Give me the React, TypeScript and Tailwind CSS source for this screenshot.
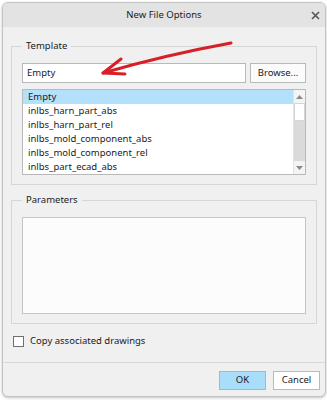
import React from "react";

const templates = [
  "Empty",
  "inlbs_harn_part_abs",
  "inlbs_harn_part_rel",
  "inlbs_mold_component_abs",
  "inlbs_mold_component_rel",
  "inlbs_part_ecad_abs",
];

function ScrollArrow({ up }: { up?: boolean }) {
  return (
    <div className="h-[13px] flex items-center justify-center bg-[#f4f4f4]">
      <svg width="7" height="4" viewBox="0 0 7 4">
        <path d={up ? "M0 4 L3.5 0 L7 4 Z" : "M0 0 L3.5 4 L7 0 Z"} fill="#8a8a8a" />
      </svg>
    </div>
  );
}

export default function App() {
  return (
    <div
      className="relative w-[327px] h-[400px] bg-white pt-[2px] pl-[2px] text-[9.5px] text-[#1b1b1b]"
      style={{ fontFamily: '"Noto Sans", "Open Sans", sans-serif' }}
    >
      <div className="w-[324px] h-[395px] flex flex-col rounded-[6px] border border-[#c4c4c4] bg-[#f0f0f0] overflow-hidden shadow-[0_1px_3px_rgba(0,0,0,0.25)]">
        {/* Title bar */}
        <div className="relative h-[24px] shrink-0 bg-[#e3e3e3] flex items-center justify-center">
          <span className="text-[9.5px] text-[#1b1b1b]">New File Options</span>
          <span className="absolute right-[3px] top-[5px] w-[14px] h-[14px] flex items-center justify-center">
            <svg width="9" height="9" viewBox="0 0 9 9">
              <path d="M1 1 L8 8 M8 1 L1 8" stroke="#555" strokeWidth="1.6" />
            </svg>
          </span>
        </div>

        <div className="flex flex-col px-[8px] pt-[12px]">
          {/* Template group */}
          <fieldset className="border border-[#d6d6d6] px-[10px] pt-[10px] pb-[9px]">
            <legend className="px-[4px] leading-[14px]">Template</legend>
            <div className="flex gap-[4px]">
              <div className="flex-1 h-[20px] border border-[#b9b9b9] bg-white flex items-center px-[4px]">
                Empty
              </div>
              <button className="w-[56px] h-[20px] border border-[#b9b9b9] bg-[#fbfbfb] flex items-center justify-center">
                Browse...
              </button>
            </div>
            <div className="mt-[6px] h-[86px] border border-[#b9b9b9] bg-white flex">
              <div className="flex-1 flex flex-col">
                {templates.map((t, i) => (
                  <div
                    key={t}
                    className={
                      i === 0
                        ? "h-[14px] leading-[14px] px-[5px] bg-[#b3e1fb]"
                        : "h-[14px] leading-[14px] px-[5px]"
                    }
                  >
                    {t}
                  </div>
                ))}
              </div>
              <div className="w-[12px] flex flex-col border-l border-[#e2e2e2] bg-[#dadada]">
                <ScrollArrow up />
                <div className="h-[18px] bg-white border border-[#d6d6d6]" />
                <div className="flex-1" />
                <ScrollArrow />
              </div>
            </div>
          </fieldset>

          {/* Parameters group */}
          <fieldset className="mt-[8px] border border-[#d6d6d6] px-[10px] pt-[10px] pb-[9px]">
            <legend className="px-[4px] leading-[14px]">Parameters</legend>
            <div className="h-[97px] border border-[#c6c6c6] bg-[#fcfcfc]" />
          </fieldset>

          {/* Checkbox */}
          <label className="mt-[9px] flex items-center gap-[6px] pl-[2px] leading-[16px]">
            <span className="w-[11px] h-[11px] border border-[#6f6f6f] bg-white" />
            <span>Copy associated drawings</span>
          </label>
        </div>

        {/* Footer */}
        <div className="mt-auto h-[34px] shrink-0 border-t border-[#d9d9d9] flex justify-end items-start gap-[7px] px-[5px] pt-[8px]">
          <button className="w-[47px] h-[19px] border border-[#7cc6ec] bg-[#a9defa] flex items-center justify-center">
            OK
          </button>
          <button className="w-[47px] h-[19px] border border-[#b9b9b9] bg-white flex items-center justify-center">
            Cancel
          </button>
        </div>
      </div>

      {/* Red annotation arrow */}
      <svg className="absolute left-0 top-0 pointer-events-none" width="327" height="400">
        <path
          d="M231 43 Q165 55 103 73"
          fill="none"
          stroke="#d61f26"
          strokeWidth="3"
          strokeLinecap="round"
        />
        <path
          d="M121 59 L103 73 L125 74"
          fill="none"
          stroke="#d61f26"
          strokeWidth="3"
          strokeLinecap="round"
          strokeLinejoin="round"
        />
      </svg>
    </div>
  );
}
